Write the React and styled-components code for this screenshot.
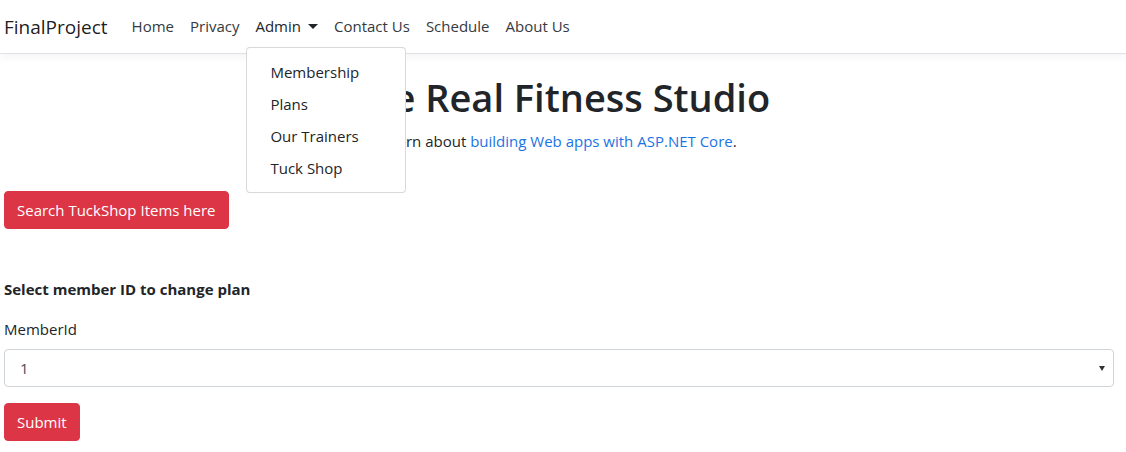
import React from "react";
import styled, { createGlobalStyle } from "styled-components";

const GlobalStyle = createGlobalStyle`
    * { box-sizing: border-box; }
    body {
        margin: 0;
        font-family: "Open Sans", "Noto Sans", sans-serif;
        font-size: 15px;
        line-height: 1.5;
        color: #212529;
        background: #fff;
    }
`

const navLinks = ["Home", "Privacy", "Admin", "Contact Us", "Schedule", "About Us"];
const adminItems = ["Membership", "Plans", "Our Trainers", "Tuck Shop"];

export default function App() {
    return (
        <Wrapper>
            <GlobalStyle />
            <Navbar>
                <Brand>FinalProject</Brand>
                <NavList>
                    {navLinks.map((l) =>
                        l === "Admin" ? (
                            <NavItem key={l}>
                                <NavLink active>
                                    Admin <Caret />
                                </NavLink>
                                <DropdownMenu>
                                    {adminItems.map((i) => (
                                        <DropdownItem key={i}>{i}</DropdownItem>
                                    ))}
                                </DropdownMenu>
                            </NavItem>
                        ) : (
                            <NavItem key={l}>
                                <NavLink>{l}</NavLink>
                            </NavItem>
                        )
                    )}
                </NavList>
            </Navbar>
            <Main>
                <Hero>
                    <Title>The Real Fitness Studio</Title>
                    <Lead>
                        Learn about <Link>building Web apps with ASP.NET Core</Link>.
                    </Lead>
                </Hero>
                <Btn top="38px">Search TuckShop Items here</Btn>
                <SectionTitle>Select member ID to change plan</SectionTitle>
                <Label>MemberId</Label>
                <SelectBox>
                    <span>1</span>
                    <SelectArrow />
                </SelectBox>
                <Btn top="16px">Submit</Btn>
            </Main>
        </Wrapper>
    );
}

const Wrapper = styled.div`
    width: 1126px;
`
const Navbar = styled.nav`
    height: 54px;
    display: flex;
    align-items: center;
    padding: 0 4px;
    border-bottom: 1px solid #dee2e6;
    box-shadow: 0 4px 8px rgba(0, 0, 0, 0.04);
    position: relative;
    z-index: 2;
`
const Brand = styled.a`
    font-size: 19px;
    color: rgba(0, 0, 0, 0.9);
    margin-right: 16px;
    line-height: 30px;
`
const NavList = styled.ul`
    display: flex;
    list-style: none;
    margin: 0;
    padding: 0;
`
const NavItem = styled.li`
    position: relative;
`
const NavLink = styled.a`
    display: flex;
    align-items: center;
    gap: 7px;
    padding: 8px 8px;
    font-size: 15px;
    color: ${(p) => (p.active ? "#212529" : "#343a40")};
`
const Caret = styled.span`
    width: 0;
    height: 0;
    border-left: 5px solid transparent;
    border-right: 5px solid transparent;
    border-top: 5px solid #212529;
`
const DropdownMenu = styled.div`
    position: absolute;
    top: 40px;
    left: -1px;
    width: 160px;
    padding: 8px 0;
    background: #fff;
    border: 1px solid rgba(0, 0, 0, 0.15);
    border-radius: 4px;
`
const DropdownItem = styled.a`
    display: block;
    padding: 4px 23px;
    font-size: 15px;
    line-height: 24px;
    color: #212529;
    white-space: nowrap;
`
const Main = styled.main`
    padding: 0 12px 0 4px;
`
const Hero = styled.div`
    text-align: center;
    padding-top: 19px;
`
const Title = styled.h1`
    margin: 0 0 8px;
    font-size: 38px;
    font-weight: 600;
    line-height: 48px;
`
const Lead = styled.p`
    margin: 0;
    line-height: 24px;
`
const Link = styled.a`
    color: #1b74e4;
`
const Btn = styled.button`
    display: block;
    margin-top: ${(p) => p.top};
    padding: 6px 12px;
    font-family: inherit;
    font-size: 15px;
    line-height: 24px;
    color: #fff;
    background: #dc3545;
    border: 1px solid #dc3545;
    border-radius: 4px;
`
const SectionTitle = styled.h4`
    margin: 48px 0 0;
    font-size: 15px;
    font-weight: 700;
    line-height: 24px;
`
const Label = styled.label`
    display: block;
    margin-top: 16px;
    line-height: 24px;
`
const SelectBox = styled.div`
    margin-top: 8px;
    height: 38px;
    display: flex;
    align-items: center;
    justify-content: space-between;
    padding: 0 8px 0 15px;
    border: 1px solid #ced4da;
    border-radius: 4px;
    color: #495057;
`
const SelectArrow = styled.span`
    width: 0;
    height: 0;
    border-left: 3.5px solid transparent;
    border-right: 3.5px solid transparent;
    border-top: 5px solid #333;
`
